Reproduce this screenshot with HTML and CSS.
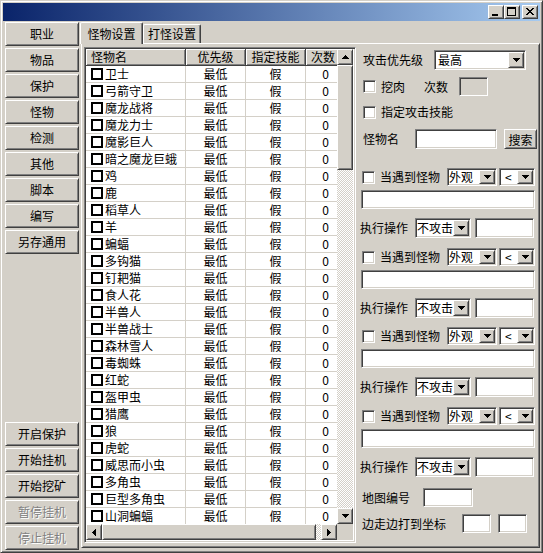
FILE: index.html
```html
<!DOCTYPE html>
<html>
<head>
<meta charset="utf-8">
<link rel="stylesheet" href="styles.css">
</head>
<body>
<svg class="defs" width="0" height="0">
  <defs>
    <symbol id="dn" viewBox="0 0 7 4"><rect x="0" y="0" width="7" height="1"/><rect x="1" y="1" width="5" height="1"/><rect x="2" y="2" width="3" height="1"/><rect x="3" y="3" width="1" height="1"/></symbol>
    <symbol id="up" viewBox="0 0 7 4"><rect x="3" y="0" width="1" height="1"/><rect x="2" y="1" width="3" height="1"/><rect x="1" y="2" width="5" height="1"/><rect x="0" y="3" width="7" height="1"/></symbol>
    <symbol id="lt" viewBox="0 0 4 7"><rect x="0" y="3" width="1" height="1"/><rect x="1" y="2" width="1" height="3"/><rect x="2" y="1" width="1" height="5"/><rect x="3" y="0" width="1" height="7"/></symbol>
    <symbol id="rt" viewBox="0 0 4 7"><rect x="0" y="0" width="1" height="7"/><rect x="1" y="1" width="1" height="5"/><rect x="2" y="2" width="1" height="3"/><rect x="3" y="3" width="1" height="1"/></symbol>
  </defs>
</svg>
<div class="window">
  <div class="titlebar">
    <span class="tbtn raised"><svg width="14" height="12" shape-rendering="crispEdges"><rect x="3" y="8" width="6" height="2"/></svg></span>
    <span class="tbtn raised"><svg width="14" height="12" shape-rendering="crispEdges"><rect x="2" y="1" width="9" height="2"/><rect x="2" y="1" width="1" height="9"/><rect x="10" y="1" width="1" height="9"/><rect x="2" y="9" width="9" height="1"/></svg></span>
    <span class="tbtn raised close"><svg width="14" height="12" shape-rendering="crispEdges"><rect x="3" y="2" width="2" height="1"/><rect x="9" y="2" width="2" height="1"/><rect x="4" y="3" width="2" height="1"/><rect x="8" y="3" width="2" height="1"/><rect x="5" y="4" width="4" height="1"/><rect x="6" y="5" width="2" height="1"/><rect x="5" y="6" width="4" height="1"/><rect x="4" y="7" width="2" height="1"/><rect x="8" y="7" width="2" height="1"/><rect x="3" y="8" width="2" height="1"/><rect x="9" y="8" width="2" height="1"/></svg></span>
  </div>
  <div class="client">
    <div class="sidebar">
      <div class="navgroup">
        <div class="btn raised">职业</div>
        <div class="btn raised">物品</div>
        <div class="btn raised">保护</div>
        <div class="btn raised">怪物</div>
        <div class="btn raised">检测</div>
        <div class="btn raised">其他</div>
        <div class="btn raised">脚本</div>
        <div class="btn raised">编写</div>
        <div class="btn raised">另存通用</div>
      </div>
      <div class="navgroup">
        <div class="btn raised">开启保护</div>
        <div class="btn raised">开始挂机</div>
        <div class="btn raised">开始挖矿</div>
        <div class="btn raised disabled">暂停挂机</div>
        <div class="btn raised disabled">停止挂机</div>
      </div>
    </div>
    <div class="tabs">
      <div class="tabstrip">
        <div class="tab active">怪物设置</div>
        <div class="tab">打怪设置</div>
      </div>
      <div class="panel">
        <div class="listview sunken">
          <div class="lv-body">
            <div class="lv-head">
              <div class="hd c1 left">怪物名</div>
              <div class="hd c2">优先级</div>
              <div class="hd c3">指定技能</div>
              <div class="hd c4">次数</div>
            </div>
            <div class="row"><div class="cell c1"><span class="lcb"></span>卫士</div><div class="cell c2">最低</div><div class="cell c3">假</div><div class="cell c4">0</div></div>
            <div class="row"><div class="cell c1"><span class="lcb"></span>弓箭守卫</div><div class="cell c2">最低</div><div class="cell c3">假</div><div class="cell c4">0</div></div>
            <div class="row"><div class="cell c1"><span class="lcb"></span>魔龙战将</div><div class="cell c2">最低</div><div class="cell c3">假</div><div class="cell c4">0</div></div>
            <div class="row"><div class="cell c1"><span class="lcb"></span>魔龙力士</div><div class="cell c2">最低</div><div class="cell c3">假</div><div class="cell c4">0</div></div>
            <div class="row"><div class="cell c1"><span class="lcb"></span>魔影巨人</div><div class="cell c2">最低</div><div class="cell c3">假</div><div class="cell c4">0</div></div>
            <div class="row"><div class="cell c1"><span class="lcb"></span>暗之魔龙巨蛾</div><div class="cell c2">最低</div><div class="cell c3">假</div><div class="cell c4">0</div></div>
            <div class="row"><div class="cell c1"><span class="lcb"></span>鸡</div><div class="cell c2">最低</div><div class="cell c3">假</div><div class="cell c4">0</div></div>
            <div class="row"><div class="cell c1"><span class="lcb"></span>鹿</div><div class="cell c2">最低</div><div class="cell c3">假</div><div class="cell c4">0</div></div>
            <div class="row"><div class="cell c1"><span class="lcb"></span>稻草人</div><div class="cell c2">最低</div><div class="cell c3">假</div><div class="cell c4">0</div></div>
            <div class="row"><div class="cell c1"><span class="lcb"></span>羊</div><div class="cell c2">最低</div><div class="cell c3">假</div><div class="cell c4">0</div></div>
            <div class="row"><div class="cell c1"><span class="lcb"></span>蝙蝠</div><div class="cell c2">最低</div><div class="cell c3">假</div><div class="cell c4">0</div></div>
            <div class="row"><div class="cell c1"><span class="lcb"></span>多钩猫</div><div class="cell c2">最低</div><div class="cell c3">假</div><div class="cell c4">0</div></div>
            <div class="row"><div class="cell c1"><span class="lcb"></span>钉耙猫</div><div class="cell c2">最低</div><div class="cell c3">假</div><div class="cell c4">0</div></div>
            <div class="row"><div class="cell c1"><span class="lcb"></span>食人花</div><div class="cell c2">最低</div><div class="cell c3">假</div><div class="cell c4">0</div></div>
            <div class="row"><div class="cell c1"><span class="lcb"></span>半兽人</div><div class="cell c2">最低</div><div class="cell c3">假</div><div class="cell c4">0</div></div>
            <div class="row"><div class="cell c1"><span class="lcb"></span>半兽战士</div><div class="cell c2">最低</div><div class="cell c3">假</div><div class="cell c4">0</div></div>
            <div class="row"><div class="cell c1"><span class="lcb"></span>森林雪人</div><div class="cell c2">最低</div><div class="cell c3">假</div><div class="cell c4">0</div></div>
            <div class="row"><div class="cell c1"><span class="lcb"></span>毒蜘蛛</div><div class="cell c2">最低</div><div class="cell c3">假</div><div class="cell c4">0</div></div>
            <div class="row"><div class="cell c1"><span class="lcb"></span>红蛇</div><div class="cell c2">最低</div><div class="cell c3">假</div><div class="cell c4">0</div></div>
            <div class="row"><div class="cell c1"><span class="lcb"></span>盔甲虫</div><div class="cell c2">最低</div><div class="cell c3">假</div><div class="cell c4">0</div></div>
            <div class="row"><div class="cell c1"><span class="lcb"></span>猎鹰</div><div class="cell c2">最低</div><div class="cell c3">假</div><div class="cell c4">0</div></div>
            <div class="row"><div class="cell c1"><span class="lcb"></span>狼</div><div class="cell c2">最低</div><div class="cell c3">假</div><div class="cell c4">0</div></div>
            <div class="row"><div class="cell c1"><span class="lcb"></span>虎蛇</div><div class="cell c2">最低</div><div class="cell c3">假</div><div class="cell c4">0</div></div>
            <div class="row"><div class="cell c1"><span class="lcb"></span>威思而小虫</div><div class="cell c2">最低</div><div class="cell c3">假</div><div class="cell c4">0</div></div>
            <div class="row"><div class="cell c1"><span class="lcb"></span>多角虫</div><div class="cell c2">最低</div><div class="cell c3">假</div><div class="cell c4">0</div></div>
            <div class="row"><div class="cell c1"><span class="lcb"></span>巨型多角虫</div><div class="cell c2">最低</div><div class="cell c3">假</div><div class="cell c4">0</div></div>
            <div class="row"><div class="cell c1"><span class="lcb"></span>山洞蝙蝠</div><div class="cell c2">最低</div><div class="cell c3">假</div><div class="cell c4">0</div></div>
          </div>
          <div class="vscroll">
            <div class="sbtn raised"><svg class="av"><use href="#up"/></svg></div>
            <div class="vthumb raised"></div>
            <div class="track"></div>
            <div class="sbtn raised"><svg class="av"><use href="#dn"/></svg></div>
          </div>
          <div class="hscroll">
            <div class="sbtn raised"><svg class="ah"><use href="#lt"/></svg></div>
            <div class="hthumb raised"></div>
            <div class="track"></div>
            <div class="sbtn raised"><svg class="ah"><use href="#rt"/></svg></div>
          </div>
          <div class="corner"></div>
        </div>

        <div class="settings">
          <div class="r r1">
            <span class="lbl w71">攻击优先级</span>
            <div class="combo sunken w92 h20"><span class="val pad2">最高</span><span class="dd raised"><svg class="av"><use href="#dn"/></svg></span></div>
          </div>
          <div class="r r2">
            <span class="cb sunken"></span>
            <span class="lbl w43 ml5">挖肉</span>
            <span class="lbl w35">次数</span>
            <span class="field sunken gray w29 h19"></span>
          </div>
          <div class="r r3">
            <span class="cb sunken"></span>
            <span class="lbl ml5">指定攻击技能</span>
          </div>
          <div class="r r4">
            <span class="lbl w52">怪物名</span>
            <span class="field sunken w82 h20"></span>
            <span class="pbtn raised">搜索</span>
          </div>

          <div class="grp g1">
            <div class="r crow">
              <span class="cb sunken"></span>
              <span class="lbl w67 ml5">当遇到怪物</span>
              <div class="combo sunken w50 h18"><span class="val">外观</span><span class="dd raised"><svg class="av"><use href="#dn"/></svg></span></div>
              <div class="combo sunken w36 h18 ml2"><span class="val pad4">&lt;</span><span class="dd raised"><svg class="av"><use href="#dn"/></svg></span></div>
            </div>
            <span class="field sunken tbox"></span>
            <div class="r arow">
              <span class="lbl w55">执行操作</span>
              <div class="combo sunken w56 h20"><span class="val">不攻击</span><span class="dd raised"><svg class="av"><use href="#dn"/></svg></span></div>
              <span class="field sunken w59 h20 ml4"></span>
            </div>
          </div>

          <div class="grp g2">
            <div class="r crow">
              <span class="cb sunken"></span>
              <span class="lbl w67 ml5">当遇到怪物</span>
              <div class="combo sunken w50 h18"><span class="val">外观</span><span class="dd raised"><svg class="av"><use href="#dn"/></svg></span></div>
              <div class="combo sunken w36 h18 ml2"><span class="val pad4">&lt;</span><span class="dd raised"><svg class="av"><use href="#dn"/></svg></span></div>
            </div>
            <span class="field sunken tbox"></span>
            <div class="r arow">
              <span class="lbl w55">执行操作</span>
              <div class="combo sunken w56 h20"><span class="val">不攻击</span><span class="dd raised"><svg class="av"><use href="#dn"/></svg></span></div>
              <span class="field sunken w59 h20 ml4"></span>
            </div>
          </div>

          <div class="grp g3">
            <div class="r crow">
              <span class="cb sunken"></span>
              <span class="lbl w67 ml5">当遇到怪物</span>
              <div class="combo sunken w50 h18"><span class="val">外观</span><span class="dd raised"><svg class="av"><use href="#dn"/></svg></span></div>
              <div class="combo sunken w36 h18 ml2"><span class="val pad4">&lt;</span><span class="dd raised"><svg class="av"><use href="#dn"/></svg></span></div>
            </div>
            <span class="field sunken tbox"></span>
            <div class="r arow">
              <span class="lbl w55">执行操作</span>
              <div class="combo sunken w56 h20"><span class="val">不攻击</span><span class="dd raised"><svg class="av"><use href="#dn"/></svg></span></div>
              <span class="field sunken w59 h20 ml4"></span>
            </div>
          </div>

          <div class="grp g4">
            <div class="r crow">
              <span class="cb sunken"></span>
              <span class="lbl w67 ml5">当遇到怪物</span>
              <div class="combo sunken w50 h18"><span class="val">外观</span><span class="dd raised"><svg class="av"><use href="#dn"/></svg></span></div>
              <div class="combo sunken w36 h18 ml2"><span class="val pad4">&lt;</span><span class="dd raised"><svg class="av"><use href="#dn"/></svg></span></div>
            </div>
            <span class="field sunken tbox"></span>
            <div class="r arow">
              <span class="lbl w55">执行操作</span>
              <div class="combo sunken w56 h20"><span class="val">不攻击</span><span class="dd raised"><svg class="av"><use href="#dn"/></svg></span></div>
              <span class="field sunken w59 h20 ml4"></span>
            </div>
          </div>

          <div class="r mrow">
            <span class="lbl w61">地图编号</span>
            <span class="field sunken w50 h19"></span>
          </div>
          <div class="r prow">
            <span class="lbl w100">边走边打到坐标</span>
            <span class="field sunken w29 h19"></span>
            <span class="field sunken w29 h19 ml7"></span>
          </div>
        </div>
      </div>
    </div>
  </div>
</div>
</body>
</html>
```

FILE: styles.css
```css
* { box-sizing: border-box; }
html, body { margin: 0; padding: 0; }
body {
  width: 543px;
  height: 553px;
  overflow: hidden;
  background: #d4d0c8;
  color: #000;
  font-family: "Noto Sans CJK SC", "Liberation Sans", sans-serif;
  font-size: 12px;
}
.defs { position: absolute; width: 0; height: 0; }
svg { fill: #000; shape-rendering: crispEdges; display: block; }

.raised {
  background: #d4d0c8;
  border: 1px solid;
  border-color: #fff #404040 #404040 #fff;
  box-shadow: inset 1px 1px #d4d0c8, inset -1px -1px #808080;
}
.sunken {
  background: #fff;
  border: 1px solid;
  border-color: #808080 #fff #fff #808080;
  box-shadow: inset 1px 1px #404040, inset -1px -1px #d4d0c8;
}

.window {
  width: 543px;
  height: 553px;
  padding: 2px;
  border: 1px solid;
  border-color: #d4d0c8 #404040 #404040 #d4d0c8;
  box-shadow: inset 1px 1px #fff, inset -1px -1px #808080;
  display: flex;
  flex-direction: column;
}

.titlebar {
  height: 18px;
  flex: none;
  background: linear-gradient(to right, #0a246a, #a6caf0);
  display: flex;
  justify-content: flex-end;
  align-items: center;
  padding-right: 2px;
}
.tbtn { width: 16px; height: 14px; display: flex; }
.tbtn.close { margin-left: 2px; }

.client {
  flex: 1;
  margin-top: 1px;
  display: flex;
  min-height: 0;
}

.sidebar {
  width: 78px;
  flex: none;
  padding: 0 2px;
  display: flex;
  flex-direction: column;
  justify-content: space-between;
}
.navgroup { display: flex; flex-direction: column; gap: 2px; }
.btn {
  height: 24px;
  display: flex;
  align-items: center;
  justify-content: center;
  line-height: 14px;
}
.btn.disabled { color: #808080; text-shadow: 1px 1px 0 #fff; }

.tabs {
  flex: 1;
  display: flex;
  flex-direction: column;
  margin-bottom: 2px;
}
.tabstrip {
  height: 21px;
  flex: none;
  display: flex;
  align-items: flex-end;
  position: relative;
  z-index: 1;
}
.tab {
  height: 19px;
  width: 58px;
  border-top: 1px solid #fff;
  border-left: 1px solid #fff;
  border-right: 1px solid #404040;
  border-radius: 2px 2px 0 0;
  box-shadow: inset -1px 0 #808080;
  background: #d4d0c8;
  text-align: center;
  line-height: 16px;
  padding-top: 1px;
}
.tab.active {
  height: 22px;
  width: 63px;
  margin-left: -1px;
  margin-bottom: -1px;
  padding-top: 3px;
}

.panel {
  flex: 1;
  display: flex;
  align-items: flex-start;
  border: 1px solid;
  border-color: #fff #404040 #404040 #fff;
  box-shadow: inset 1px 1px #d4d0c8, inset -1px -1px #808080;
  padding: 3px 0 0 2px;
}

.listview {
  width: 272px;
  height: 496px;
  flex: none;
  padding: 0;
  display: grid;
  grid-template-columns: 252px 16px;
  grid-template-rows: 476px 16px;
}
.lv-body {
  overflow: hidden;
  background: #fff;
  margin: 1px 0 0 1px;
}
.lv-head, .row { display: flex; width: 260px; }
.c1 { width: 100px; flex: none; }
.c2 { width: 60px; flex: none; }
.c3 { width: 60px; flex: none; }
.c4 { width: 40px; flex: none; }
.hd {
  height: 17px;
  background: #d4d0c8;
  border-right: 1px solid #404040;
  border-bottom: 1px solid #404040;
  box-shadow: inset 1px 1px #fff, inset -1px -1px #808080;
  text-align: center;
  line-height: 15px;
}
.hd.left { text-align: left; padding-left: 5px; }
.hd.c4 { text-align: left; padding-left: 5px; }
.row { height: 17px; }
.cell {
  height: 17px;
  border-right: 1px solid #d4d0c8;
  border-bottom: 1px solid #d4d0c8;
  line-height: 16px;
  text-align: center;
  white-space: nowrap;
}
.cell.c1 {
  text-align: left;
  padding-left: 5px;
  display: flex;
  align-items: center;
}
.lcb {
  width: 12px;
  height: 12px;
  border: 2px solid #000;
  background: #fff;
  margin-right: 2px;
  flex: none;
}

.vscroll {
  margin-top: 1px;
  display: flex;
  flex-direction: column;
  background-color: #fff;
  background-image: repeating-conic-gradient(#d4d0c8 0% 25%, #fff 0% 50%);
  background-size: 2px 2px;
}
.hscroll {
  margin-left: 1px;
  display: flex;
  background-color: #fff;
  background-image: repeating-conic-gradient(#d4d0c8 0% 25%, #fff 0% 50%);
  background-size: 2px 2px;
}
.corner { background: #d4d0c8; }
.sbtn {
  width: 16px;
  height: 16px;
  flex: none;
  display: flex;
  align-items: center;
  justify-content: center;
}
.vthumb { height: 105px; flex: none; }
.hthumb { width: 214px; flex: none; }
.track { flex: 1; }
.av { width: 7px; height: 4px; }
.ah { width: 4px; height: 7px; }

.settings {
  flex: 1;
  display: flex;
  flex-direction: column;
}
.r { display: flex; align-items: center; white-space: nowrap; }
.r1 { margin-top: 3px; height: 20px; padding-left: 7px; }
.r2 { margin-top: 7px; height: 19px; padding-left: 7px; }
.r3 { margin-top: 8px; height: 16px; padding-left: 7px; }
.r4 { margin-top: 9px; height: 20px; padding-left: 7px; }
.grp { display: flex; flex-direction: column; }
.g1 { margin-top: 19px; }
.g2 { margin-top: 10px; }
.g3 { margin-top: 9px; }
.g4 { margin-top: 10px; }
.crow { height: 18px; padding-left: 6px; }
.tbox { display: block; height: 19px; width: 174px; margin: 4px 0 0 5px; }
.arow { height: 20px; margin-top: 9px; padding-left: 4px; }
.mrow { height: 19px; margin-top: 11px; padding-left: 6px; }
.prow { height: 19px; margin-top: 7px; padding-left: 6px; }

.lbl { flex: none; line-height: 16px; }
.w29 { width: 29px; }
.w35 { width: 35px; }
.w36 { width: 36px; }
.w43 { width: 43px; }
.w50 { width: 50px; }
.w52 { width: 52px; }
.w55 { width: 55px; }
.w56 { width: 56px; }
.w59 { width: 59px; }
.w61 { width: 61px; }
.w67 { width: 67px; }
.w71 { width: 71px; }
.w82 { width: 82px; }
.w92 { width: 92px; }
.w100 { width: 100px; }
.h18 { height: 18px; }
.h19 { height: 19px; }
.h20 { height: 20px; }
.ml2 { margin-left: 2px; }
.ml4 { margin-left: 4px; }
.ml5 { margin-left: 5px; }
.ml7 { margin-left: 7px; }

.cb { width: 13px; height: 13px; flex: none; display: block; }
.field { display: block; flex: none; }
.field.gray { background: #d4d0c8; }

.combo {
  display: flex;
  flex: none;
  align-items: stretch;
  padding: 1px;
}
.combo .val {
  flex: 1;
  min-width: 0;
  padding-left: 0;
  line-height: 14px;
  display: flex;
  align-items: center;
  white-space: nowrap;
}
.combo .val.pad2 { padding-left: 2px; }
.combo .val.pad4 { padding-left: 4px; }
.combo .dd {
  width: 16px;
  flex: none;
  display: flex;
  align-items: center;
  justify-content: center;
}
.pbtn {
  width: 33px;
  height: 20px;
  margin-left: 7px;
  display: flex;
  align-items: center;
  justify-content: center;
  flex: none;
}
```
